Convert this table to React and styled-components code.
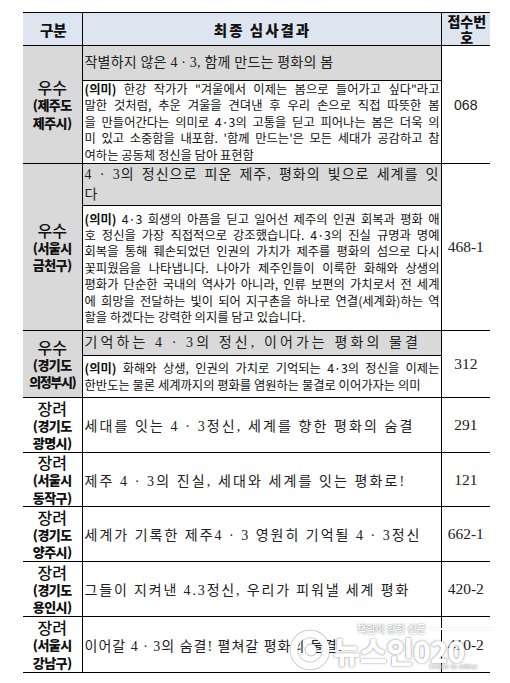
import React from "react";
import styled, { createGlobalStyle } from "styled-components";

const GlobalStyle = createGlobalStyle`
  html, body {
    margin: 0;
    padding: 0;
    background: #fff;
  }
  body {
    font-family: "Noto Sans CJK KR", "Noto Sans", sans-serif;
    color: #111;
  }
`;

// 심사결과 데이터
const prizes = [
  {
    grade: "우수",
    region: ["(제주도", "제주시)"],
    title: ["작별하지 않은 4 · 3, 함께 만드는 평화의 봄"],
    spacing: 0.2,
    titleHeight: 35,
    desc: [
      '(의미) 한강 작가가 "겨울에서 이제는 봄으로 들어가고 싶다"라고',
      "말한 것처럼, 추운 겨울을 견뎌낸 후 우리 손으로 직접 따뜻한 봄",
      "을 만들어간다는 의미로 4·3의 고통을 딛고 피어나는 봄은 더욱 의",
      "미 있고 소중함을 내포함. '함께 만드는'은 모든 세대가 공감하고 참",
      "여하는 공동체 정신을 담아 표현함",
    ],
    descHeight: 83,
    no: "068",
    sans: true,
  },
  {
    grade: "우수",
    region: ["(서울시", "금천구)"],
    title: ["4 · 3의 정신으로 피운 제주, 평화의 빛으로 세계를 잇", "다"],
    spacing: 1,
    titleHeight: 42,
    desc: [
      "(의미) 4·3 희생의 아픔을 딛고 일어선 제주의 인권 회복과 평화 애",
      "호 정신을 가장 직접적으로 강조했습니다. 4·3의 진실 규명과 명예",
      "회복을 통해 훼손되었던 인권의 가치가 제주를 평화의 섬으로 다시",
      "꽃피웠음을 나타냅니다. 나아가 제주인들이 이룩한 화해와 상생의",
      "평화가 단순한 국내의 역사가 아니라, 인류 보편의 가치로서 전 세계",
      "에 희망을 전달하는 빛이 되어 지구촌을 하나로 연결(세계화)하는 역",
      "할을 하겠다는 강력한 의지를 담고 있습니다.",
    ],
    descHeight: 125,
    no: "468-1",
  },
  {
    grade: "우수",
    region: ["(경기도", "의정부시)"],
    title: ["기억하는 4 · 3의 정신, 이어가는 평화의 물결"],
    spacing: 3.1,
    titleHeight: 25,
    desc: [
      "(의미) 화해와 상생, 인권의 가치로 기억되는 4·3의 정신을 이제는",
      "한반도는 물론 세계까지의 평화를 염원하는 물결로 이어가자는 의미",
    ],
    descHeight: 42,
    no: "312",
  },
];

const honors = [
  { region: ["(경기도", "광명시)"], slogan: "세대를 잇는 4 · 3정신, 세계를 향한 평화의 숨결", spacing: 2.1, no: "291", height: 55 },
  { region: ["(서울시", "동작구)"], slogan: "제주 4 · 3의 진실, 세대와 세계를 잇는 평화로!", spacing: 2.1, no: "121", height: 54 },
  { region: ["(경기도", "양주시)"], slogan: "세계가 기록한 제주4 · 3 영원히 기억될 4 · 3정신", spacing: 2, no: "662-1", height: 55 },
  { region: ["(경기도", "용인시)"], slogan: "그들이 지켜낸 4.3정신, 우리가 피워낼 세계 평화", spacing: 1.85, no: "420-2", height: 55 },
  { region: ["(서울시", "강남구)"], slogan: "이어갈 4 · 3의 숨결! 펼쳐갈 평화의 물결!", spacing: 1, no: "410-2", height: 56 },
];

const Grade = ({ grade, region }) => (
  <>
    <GradeName>{grade}</GradeName>
    {region.map((r) => (
      <Region key={r} $squeeze={r.length > 4}>
        {r}
      </Region>
    ))}
  </>
);

const App = () => {
  return (
    <Page>
      <GlobalStyle />
      <Sheet>
        <Table>
          <colgroup>
            <col style={{ width: 59 }} />
            <col style={{ width: 359 }} />
            <col style={{ width: 49 }} />
          </colgroup>
          <thead>
            <HeadRow>
              <Th>구분</Th>
              <Th $wide>최종 심사결과</Th>
              <Th $narrow>접수번호</Th>
            </HeadRow>
          </thead>
          <tbody>
            {prizes.map((p) => (
              <React.Fragment key={p.no}>
                <tr style={{ height: p.titleHeight }}>
                  <GradeCell rowSpan={2} $shaded>
                    <Grade grade={p.grade} region={p.region} />
                  </GradeCell>
                  <TitleCell>
                    {p.title.map((t, i) => (
                      <TitleLine
                        key={t}
                        $spacing={p.spacing}
                        $justify={p.title.length > 1 && i < p.title.length - 1}
                      >
                        {t}
                      </TitleLine>
                    ))}
                  </TitleCell>
                  <NumCell rowSpan={2} $sans={p.sans}>
                    {p.no}
                  </NumCell>
                </tr>
                <tr style={{ height: p.descHeight }}>
                  <DescCell>
                    {p.desc.map((d, i) => (
                      <DescLine key={d} $last={i === p.desc.length - 1}>
                        {i === 0 ? (
                          <>
                            <Mark>(의미)</Mark>
                            {d.slice(4)}
                          </>
                        ) : (
                          d
                        )}
                      </DescLine>
                    ))}
                  </DescCell>
                </tr>
              </React.Fragment>
            ))}
            {honors.map((h) => (
              <tr key={h.no} style={{ height: h.height }}>
                <GradeCell>
                  <Grade grade="장려" region={h.region} />
                </GradeCell>
                <SloganCell $spacing={h.spacing}>{h.slogan}</SloganCell>
                <NumCell>{h.no}</NumCell>
              </tr>
            ))}
          </tbody>
        </Table>
        <Watermark>
          <Tagline>
            책임이 강한 신문 <Rule />
          </Tagline>
          <Logo>
            <svg width="42" height="42" viewBox="0 0 42 42">
              <circle cx="21" cy="21" r="16" fill="none" stroke="rgba(0,0,0,0.25)" strokeWidth="8.5" />
              <circle cx="21" cy="21" r="16" fill="none" stroke="#fff" strokeWidth="7" />
              <circle cx="22" cy="21" r="6" fill="#fff" stroke="rgba(0,0,0,0.25)" />
            </svg>
            <Brand>뉴스인020</Brand>
          </Logo>
          <Sub>Online to offline</Sub>
        </Watermark>
      </Sheet>
    </Page>
  );
};

const Page = styled.div`
  width: 510px;
  height: 683px;
  padding: 12px 0 0 23px;
  box-sizing: border-box;
  overflow: hidden;
`;

const Sheet = styled.div`
  position: relative;
  width: 467px;
`;

const Table = styled.table`
  border-collapse: collapse;
  table-layout: fixed;
  width: 467px;
  border-left: hidden;
  border-right: hidden;

  td,
  th {
    border: 1px solid #000;
    padding: 0;
  }
`;

const HeadRow = styled.tr`
  height: 33px;
`;

const Th = styled.th`
  background-color: #dde5f1;
  font-family: "Noto Sans CJK KR", sans-serif;
  font-size: ${(p) => (p.$narrow ? "14px" : "14.5px")};
  font-weight: 900;
  line-height: ${(p) => (p.$narrow ? "16px" : "15px")};
  letter-spacing: ${(p) => (p.$wide ? "2px" : "0")};
  color: #111;
  text-align: center;
  vertical-align: middle;
  padding: 0 0 0 2px !important;
  word-break: ${(p) => (p.$narrow ? "break-all" : "keep-all")};
`;

const GradeCell = styled.td`
  background-color: ${(p) => (p.$shaded ? "#d9d9d9" : "#fff")};
  text-align: center;
  vertical-align: middle;
`;

const GradeName = styled.div`
  font-size: 16px;
  font-weight: 500;
  line-height: 18px;
  color: #111;
`;

const Region = styled.div`
  font-size: 13px;
  font-weight: 900;
  line-height: 17.5px;
  letter-spacing: ${(p) => (p.$squeeze ? "-1.4px" : "-0.5px")};
  white-space: nowrap;
  color: #111;
`;

const TitleCell = styled.td`
  background-color: #d9d9d9;
  vertical-align: middle;
  padding: 0 1px 0 2px !important;
`;

const TitleLine = styled.div`
  font-family: "Liberation Serif", "Noto Sans CJK KR", serif;
  font-size: 14px;
  line-height: 20px;
  letter-spacing: ${(p) => p.$spacing}px;
  color: #222;
  white-space: nowrap;
  text-align: ${(p) => (p.$justify ? "justify" : "left")};
  text-align-last: ${(p) => (p.$justify ? "justify" : "left")};
`;

const DescCell = styled.td`
  vertical-align: middle;
  padding: 0 1px 0 2px !important;
`;

const DescLine = styled.div`
  font-size: 12.3px;
  line-height: 16.4px;
  color: #111;
  text-align: justify;
  text-align-last: ${(p) => (p.$last ? "left" : "justify")};
`;

const Mark = styled.span`
  font-weight: 700;
`;

const SloganCell = styled.td`
  vertical-align: middle;
  padding: 0 2px !important;
  font-family: "Liberation Serif", "Noto Sans CJK KR", serif;
  font-size: 14px;
  letter-spacing: ${(p) => p.$spacing}px;
  color: #222;
  white-space: nowrap;
`;

const NumCell = styled.td`
  text-align: center;
  vertical-align: middle;
  font-family: ${(p) => (p.$sans ? '"Liberation Sans", Arial, sans-serif' : '"Liberation Serif", serif')};
  font-size: ${(p) => (p.$sans ? "14px" : "15.5px")};
  color: #222;
`;

const Watermark = styled.div`
  position: absolute;
  left: 266px;
  bottom: 2px;
  width: 204px;
  pointer-events: none;
  color: #fff;
  text-shadow: 0 0 1px rgba(0, 0, 0, 0.5), 0 0 3px rgba(0, 0, 0, 0.25);
`;

const Tagline = styled.div`
  display: flex;
  align-items: center;
  gap: 4px;
  margin-left: 68px;
  font-size: 10px;
  font-weight: 700;
  line-height: 12px;
  white-space: nowrap;
`;

const Rule = styled.span`
  flex: 1;
  height: 2px;
  background: #fff;
  box-shadow: 0 0 1px rgba(0, 0, 0, 0.4);
`;

const Logo = styled.div`
  display: flex;
  align-items: center;
  gap: 2px;
  margin-top: -6px;
`;

const Brand = styled.span`
  font-size: 30px;
  font-weight: 900;
  letter-spacing: -1px;
  line-height: 34px;
`;

const Sub = styled.div`
  margin: -8px 0 0 140px;
  font-family: "Liberation Sans", sans-serif;
  font-size: 7px;
  line-height: 8px;
  white-space: nowrap;
`;

export default App;
